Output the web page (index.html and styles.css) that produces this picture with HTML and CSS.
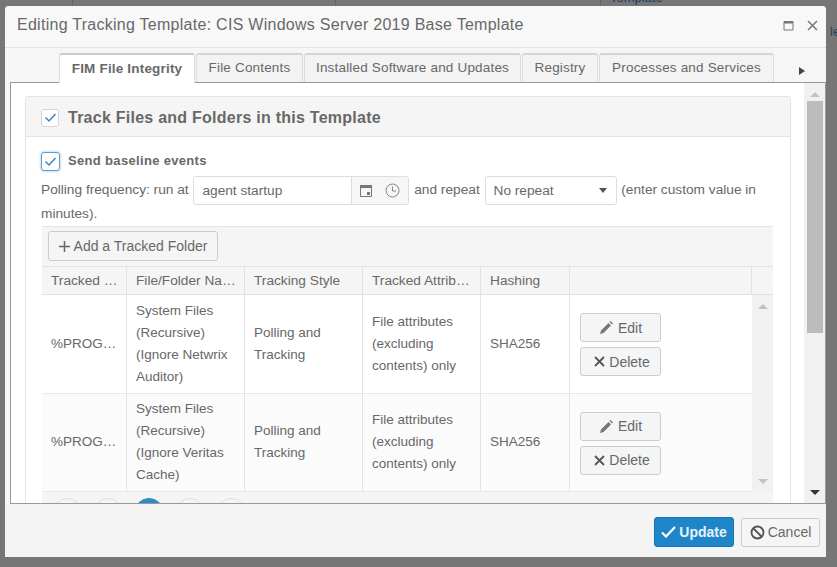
FILE: index.html
```html
<!DOCTYPE html>
<html lang="en">
<head>
    <meta charset="UTF-8">
    <title>Editing Tracking Template</title>
    <link rel="stylesheet" href="styles.css">
</head>
<body>
    <i class="behind-line line-a"></i>
    <i class="behind-line line-b"></i>
    <i class="behind-line line-c"></i>
    <span class="behind behind-top">Template</span>
    <span class="behind behind-side">le</span>
    <div class="modal">
        <div class="modal-title">
            <span class="title-text">Editing Tracking Template: CIS Windows Server 2019 Base Template</span>
            <svg class="win-icon" width="11" height="11" viewBox="0 0 11 11"><path d="M1 1.500h9v8.500h-9z" fill="none" stroke="#777"/><path d="M1 1h9v2.500h-9z" fill="#777"/></svg>
            <svg class="win-icon win-close" width="11" height="11" viewBox="0 0 11 11"><path d="M1 1l9 9M10 1l-9 9" stroke="#777" stroke-width="1.500"/></svg>
        </div>
        <div class="tabs">
            <span class="tab tab-active">FIM File Integrity</span>
            <span class="tab tab-contents">File Contents</span>
            <span class="tab tab-software">Installed Software and Updates</span>
            <span class="tab tab-registry">Registry</span>
            <span class="tab tab-processes">Processes and Services</span>
            <span class="tab-more"></span>
        </div>
        <div class="content">
            <div class="content-main">
                <div class="panel">
                    <div class="panel-head">
                        <span class="check"><svg width="13" height="11" viewBox="0 0 13 11"><path d="M1.500 5.500l3.500 3.500 6.500-7" fill="none" stroke="#3a87c8" stroke-width="1.500"/></svg></span>
                        <span class="panel-title">Track Files and Folders in this Template</span>
                    </div>
                    <div class="panel-body">
                        <div class="baseline">
                            <span class="check check-focus"><svg width="13" height="11" viewBox="0 0 13 11"><path d="M1.500 5.500l3.500 3.500 6.500-7" fill="none" stroke="#3a87c8" stroke-width="1.500"/></svg></span>
                            <span class="baseline-label">Send baseline events</span>
                        </div>
                        <div class="polling">
                            <span>Polling frequency: run at</span>
                            <span class="time-input">
                                <span class="time-value">agent startup</span>
                                <span class="time-addon">
                                    <svg width="14" height="14" viewBox="0 0 14 14"><path d="M1.500 1.500h11v11h-11z" fill="none" stroke="#777"/><path d="M1 1h12v3h-12zM8 8h3v3h-3z" fill="#777"/></svg>
                                    <svg width="15" height="15" viewBox="0 0 15 15"><circle cx="7.500" cy="7.500" r="6.500" fill="none" stroke="#888"/><path d="M7.500 3.500v4.500h3.500" fill="none" stroke="#888"/></svg>
                                </span>
                            </span>
                            <span>and repeat</span>
                            <span class="repeat-select"><span>No repeat</span><i class="caret"></i></span>
                            <span>(enter custom value in</span>
                            <span>minutes).</span>
                        </div>
                        <div class="tracked">
                            <div class="toolbar">
                                <span class="btn btn-add"><svg width="11" height="11" viewBox="0 0 11 11"><path d="M5.500 0v11M0 5.500h11" stroke="#666" stroke-width="1.500"/></svg>Add a Tracked Folder</span>
                            </div>
                            <div class="row row-head">
                                <div class="cell">Tracked …</div>
                                <div class="cell">File/Folder Na…</div>
                                <div class="cell">Tracking Style</div>
                                <div class="cell">Tracked Attrib…</div>
                                <div class="cell">Hashing</div>
                                <div class="cell"></div>
                                <div class="cell cell-end"></div>
                            </div>
                            <div class="tbody">
                                <div class="rows">
                                    <div class="row">
                                        <div class="cell">%PROG…</div>
                                        <div class="cell">System Files (Recursive) (Ignore Netwrix Auditor)</div>
                                        <div class="cell">Polling and Tracking</div>
                                        <div class="cell">File attributes (excluding contents) only</div>
                                        <div class="cell">SHA256</div>
                                        <div class="cell cell-actions">
                                            <span class="btn btn-row"><svg width="15" height="15" viewBox="0 0 15 15"><path d="M1 14l1-3.500 7.500-7.500 2.500 2.500-7.500 7.500zM10.500 2l1-1 2.500 2.500-1 1z" fill="#777"/></svg>Edit</span>
                                            <span class="btn btn-row"><svg width="11" height="11" viewBox="0 0 11 11"><path d="M1 1l9 9M10 1l-9 9" stroke="#555" stroke-width="1.800"/></svg>Delete</span>
                                        </div>
                                    </div>
                                    <div class="row row-alt">
                                        <div class="cell">%PROG…</div>
                                        <div class="cell">System Files (Recursive) (Ignore Veritas Cache)</div>
                                        <div class="cell">Polling and Tracking</div>
                                        <div class="cell">File attributes (excluding contents) only</div>
                                        <div class="cell">SHA256</div>
                                        <div class="cell cell-actions">
                                            <span class="btn btn-row"><svg width="15" height="15" viewBox="0 0 15 15"><path d="M1 14l1-3.500 7.500-7.500 2.500 2.500-7.500 7.500zM10.500 2l1-1 2.500 2.500-1 1z" fill="#777"/></svg>Edit</span>
                                            <span class="btn btn-row"><svg width="11" height="11" viewBox="0 0 11 11"><path d="M1 1l9 9M10 1l-9 9" stroke="#555" stroke-width="1.800"/></svg>Delete</span>
                                        </div>
                                    </div>
                                </div>
                                <div class="tbody-scroll">
                                    <i class="arrow-up"></i>
                                    <i class="arrow-down"></i>
                                </div>
                            </div>
                            <div class="pager">
                                <i class="page"></i><i class="page"></i><i class="page page-current"></i><i class="page"></i><i class="page"></i>
                            </div>
                        </div>
                    </div>
                </div>
            </div>
            <div class="page-scroll">
                <i class="arrow-up"></i>
                <div class="thumb"></div>
                <i class="arrow-down arrow-dark"></i>
            </div>
        </div>
        <div class="modal-foot">
            <span class="btn btn-primary"><svg width="15" height="12" viewBox="0 0 15 12"><path d="M1 6.500l4 4 9-9.500" fill="none" stroke="#fff" stroke-width="2.200"/></svg>Update</span>
            <span class="btn btn-cancel"><svg width="15" height="15" viewBox="0 0 15 15"><circle cx="7.500" cy="7.500" r="6" fill="none" stroke="#555" stroke-width="1.800"/><path d="M3.500 3.500l8 8" stroke="#555" stroke-width="1.800"/></svg>Cancel</span>
        </div>
    </div>
</body>
</html>
```

FILE: styles.css
```css
* {
    box-sizing: border-box;
}
body {
    margin: 0;
    height: 567px;
    overflow: hidden;
    padding: 6px 0 0 5px;
    background: #767676;
    color: #686868;
    font-family: "Liberation Sans", Arial, sans-serif;
    font-size: 14px;
}
.behind {
    position: absolute;
    color: #1d3f63;
    font-size: 13px;
}
.behind-top {
    left: 610px;
    top: -10px;
}
.behind-side {
    left: 830px;
    top: 24px;
}
.behind-line {
    position: absolute;
    top: 0;
    width: 1px;
    height: 6px;
    background: #666;
}
.line-a {
    left: 72px;
}
.line-b {
    left: 335px;
}
.line-c {
    left: 600px;
}
.modal {
    position: relative;
    width: 821px;
    height: 551px;
    background: #f6f6f6;
    border-radius: 4px;
    display: flex;
    flex-direction: column;
}
.modal-title {
    height: 42px;
    flex: none;
    display: flex;
    align-items: center;
    padding: 0 8px 3px 12px;
    border-bottom: 1px solid #e2e2e2;
    background: #f8f8f8;
    border-radius: 4px 4px 0 0;
}
.title-text {
    flex: 1;
    font-size: 16px;
    letter-spacing: 0.27px;
}
.win-icon {
    margin-left: 13px;
}
.tabs {
    height: 34px;
    flex: none;
    display: flex;
    align-items: flex-end;
    padding-left: 54px;
    font-size: 13.500px;
}
.tab {
    height: 29px;
    display: flex;
    align-items: center;
    justify-content: center;
    padding-bottom: 2px;
    margin-right: 1px;
    background: #f3f3f3;
    border: 1px solid #dcdcdc;
    border-top: 2px solid #d4d4d4;
    border-bottom: 0;
    border-radius: 3px 3px 0 0;
    letter-spacing: 0.18px;
}
.tab-active {
    width: 136px;
    height: 30px;
    background: #fff;
    font-weight: bold;
    border-top: 2px solid #ccc;
    margin-bottom: -1px;
    position: relative;
    z-index: 1;
}
.tab-contents {
    width: 107px;
}
.tab-software {
    width: 217px;
}
.tab-registry {
    width: 76px;
}
.tab-processes {
    width: 175px;
}
.tab-more {
    margin: 0 0 7px 24px;
    border-left: 6px solid #444;
    border-top: 4px solid transparent;
    border-bottom: 4px solid transparent;
}
.content {
    flex: none;
    height: 422px;
    margin-left: 5px;
    display: flex;
    background: #fff;
    border: 1px solid #999;
    overflow: hidden;
}
.content-main {
    flex: 1;
    min-width: 0;
    padding: 13px 13px 0 14px;
}
.panel {
    height: 500px;
    border: 1px solid #e4e4e4;
    border-radius: 3px;
}
.panel-head {
    height: 40px;
    display: flex;
    align-items: center;
    gap: 9px;
    padding: 2px 0 0 15px;
    background: #f5f5f5;
    border-bottom: 1px solid #e4e4e4;
}
.panel-title {
    font-size: 16px;
    font-weight: bold;
    letter-spacing: 0.25px;
}
.check {
    width: 18px;
    height: 18px;
    display: flex;
    align-items: center;
    justify-content: center;
    background: #fff;
    border: 1px solid #d5d5d5;
    border-radius: 3px;
}
.check-focus {
    width: 19px;
    height: 19px;
    border-color: #5b9fd4;
    box-shadow: 0 0 3px #8cc0e6;
}
.panel-body {
    padding: 15px 17px 0 15px;
}
.baseline {
    display: flex;
    align-items: center;
    gap: 8px;
    height: 19px;
}
.baseline-label {
    margin-top: -2px;
    font-size: 13px;
    font-weight: bold;
    letter-spacing: 0.33px;
}
.polling {
    margin-top: 5px;
    line-height: 17px;
    font-size: 13.700px;
}
.time-input,
.repeat-select {
    display: inline-flex;
    height: 29px;
    vertical-align: middle;
    align-items: center;
    background: #fff;
    border: 1px solid #ddd;
    border-radius: 3px;
}
.time-input {
    width: 216px;
    margin: 0 1px;
}
.time-value {
    flex: 1;
    padding-left: 8px;
}
.time-addon {
    width: 57px;
    height: 100%;
    display: flex;
    align-items: center;
    gap: 12px;
    padding-left: 7px;
    background: #f6f6f6;
    border-left: 1px solid #ddd;
    border-radius: 0 3px 3px 0;
}
.repeat-select {
    width: 132px;
    justify-content: space-between;
    padding: 0 9px 0 8px;
    margin: 0 1px;
}
.caret {
    border-top: 5px solid #555;
    border-left: 4px solid transparent;
    border-right: 4px solid transparent;
}
.tracked {
    margin: 4px 0 0 1px;
    width: 731px;
    border-top: 1px solid #e4e4e4;
}
.toolbar {
    height: 39px;
    padding: 4px 6px;
    background: #f5f5f5;
}
.btn {
    display: inline-flex;
    align-items: center;
    justify-content: center;
    background: #f5f5f5;
    border: 1px solid #ccc;
    border-radius: 3px;
    font-size: 14px;
}
.btn-add {
    width: 170px;
    height: 30px;
    gap: 4px;
}
.row {
    display: grid;
    grid-template-columns: 85px 118px 118px 118px 89px 182px;
    height: 98.500px;
    background: #fff;
    border-bottom: 1px solid #e9e9e9;
    font-size: 13.500px;
    line-height: 22px;
}
.row-alt {
    background: #fbfbfb;
}
.row-head {
    grid-template-columns: 85px 118px 118px 118px 89px 182px 21px;
    height: 29px;
    background: #f5f5f5;
    border-top: 1px solid #e2e2e2;
    border-bottom: 1px solid #e2e2e2;
    font-size: 13.700px;
    white-space: nowrap;
}
.cell {
    display: flex;
    align-items: center;
    padding: 0 9px;
    border-right: 1px solid #e2e2e2;
}
.row-head .cell {
    padding-right: 0;
}
.cell:last-child,
.row-head .cell-end {
    border-right: 0;
}
.row .cell-actions {
    flex-direction: column;
    justify-content: center;
    align-items: flex-start;
    gap: 5px;
    padding: 2px 10px 0;
}
.btn-row {
    width: 81px;
    height: 29px;
    gap: 4px;
}
.btn-row:last-child {
    padding-left: 3px;
}
.tbody {
    display: flex;
}
.rows {
    width: 710px;
}
.tbody-scroll {
    width: 21px;
    display: flex;
    flex-direction: column;
    justify-content: space-between;
    align-items: center;
    padding: 9px 0 8px;
    background: #f1f1f1;
}
.arrow-up,
.arrow-down {
    display: block;
    border-left: 5px solid transparent;
    border-right: 5px solid transparent;
}
.arrow-up {
    border-bottom: 5px solid #c2c2c2;
}
.arrow-down {
    border-top: 5px solid #c2c2c2;
}
.arrow-dark {
    border-top-color: #333;
}
.pager {
    display: flex;
    gap: 11px;
    height: 40px;
    padding: 6px 0 0 10px;
    background: #f5f5f5;
}
.page {
    width: 30px;
    height: 30px;
    border: 1px solid #ddd;
    border-radius: 50%;
}
.page-current {
    background: #2f8cc5;
    border-color: #2f8cc5;
}
.page-scroll {
    width: 21px;
    flex: none;
    display: flex;
    flex-direction: column;
    align-items: center;
    padding-top: 9px;
    background: #f1f1f1;
}
.thumb {
    width: 16px;
    height: 232px;
    margin: 4px 0 auto;
    background: #bcbcbc;
}
.page-scroll .arrow-dark {
    margin-bottom: 8px;
}
.modal-foot {
    flex: 1;
    display: flex;
    justify-content: flex-end;
    align-items: center;
    gap: 7px;
    padding: 3px 6px 0 0;
    background: #f4f4f4;
}
.btn-primary {
    width: 80px;
    height: 30px;
    gap: 3px;
    background: #1f85c9;
    border-color: #1a78b8;
    color: #e6f2fa;
    font-weight: bold;
}
.btn-cancel {
    width: 79px;
    height: 29px;
    gap: 3px;
}
```
